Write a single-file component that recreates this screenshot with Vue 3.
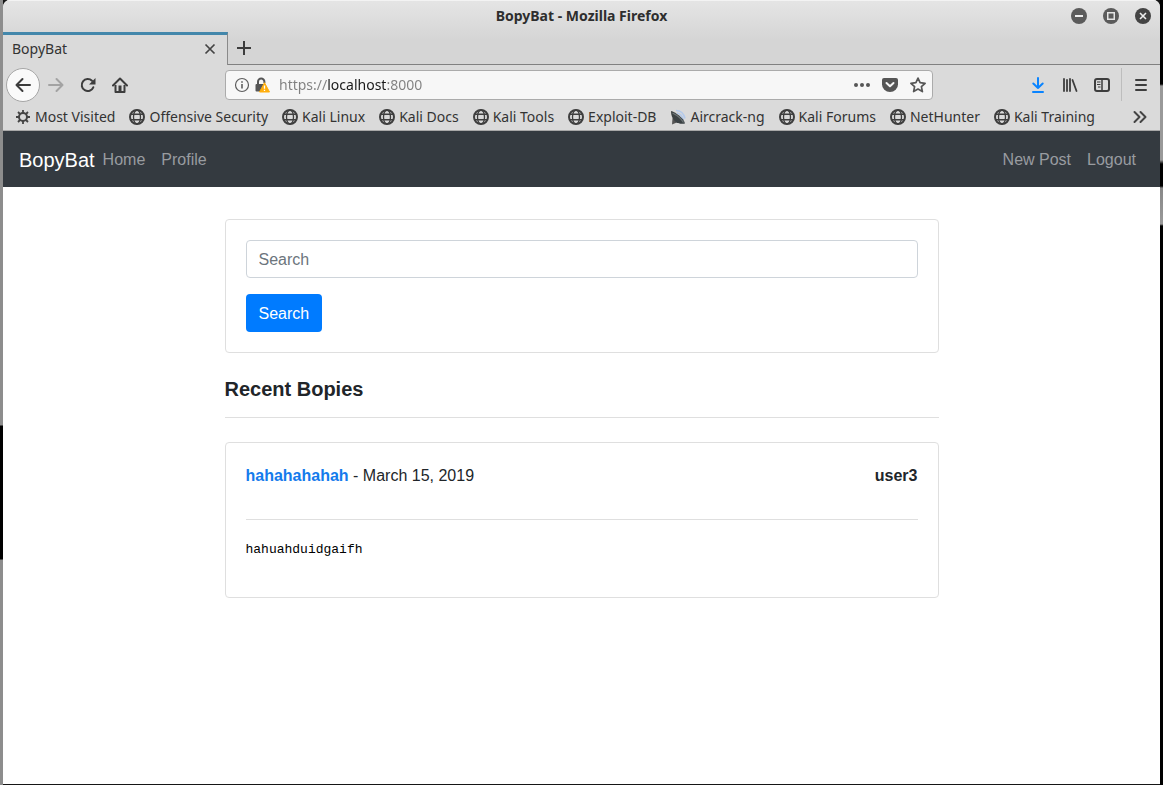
<script setup>
import { ref } from 'vue'

const address = ref('https://localhost:8000')
const query = ref('')
const bookmarks = [
  { name: 'Most Visited', icon: 'gear' },
  { name: 'Offensive Security', icon: 'globe' },
  { name: 'Kali Linux', icon: 'globe' },
  { name: 'Kali Docs', icon: 'globe' },
  { name: 'Kali Tools', icon: 'globe' },
  { name: 'Exploit-DB', icon: 'globe' },
  { name: 'Aircrack-ng', icon: 'dish' },
  { name: 'Kali Forums', icon: 'globe' },
  { name: 'NetHunter', icon: 'globe' },
  { name: 'Kali Training', icon: 'globe' },
]
const posts = [
  { title: 'hahahahahah', date: 'March 15, 2019', author: 'user3', body: 'hahuahduidgaifh' },
]
</script>

<template>
  <div class="desktop">
    <div class="window">
      <header class="chrome">
        <div class="titlebar">
          <span class="title">BopyBat - Mozilla Firefox</span>
          <div class="controls">
            <button aria-label="Minimize">
              <svg width="16" height="16" viewBox="0 0 16 16"><circle cx="8" cy="8" r="8" fill="#5b5b5b" /><path d="M4 8h8" stroke="#eee" stroke-width="2" /></svg>
            </button>
            <button aria-label="Maximize">
              <svg width="16" height="16" viewBox="0 0 16 16"><circle cx="8" cy="8" r="8" fill="#5b5b5b" /><path d="M4.75 4.75h6.5v6.5h-6.5z" fill="none" stroke="#e4e4e4" stroke-width="1.5" /></svg>
            </button>
            <button aria-label="Close">
              <svg width="16" height="16" viewBox="0 0 16 16"><circle cx="8" cy="8" r="8" fill="#444" /><path d="M5 5l6 6M11 5l-6 6" stroke="#eee" stroke-width="1.6" /></svg>
            </button>
          </div>
        </div>

        <div class="tabs">
          <div class="tab">
            <span>BopyBat</span>
            <button aria-label="Close tab">
              <svg width="16" height="16" viewBox="0 0 16 16"><path d="M3.500 3.500l9 9M12.500 3.500l-9 9" stroke="#444" stroke-width="1.700" /></svg>
            </button>
          </div>
          <div class="tab-rest">
            <button aria-label="New tab">
              <svg width="16" height="16" viewBox="0 0 16 16"><path d="M8 1v14M1 8h14" stroke="#3d3d3d" stroke-width="2" /></svg>
            </button>
          </div>
        </div>

        <div class="toolbar">
          <div class="nav-buttons">
            <button class="back" aria-label="Back">
              <svg width="16" height="16" viewBox="0 0 16 16"><path d="M15 8H1.500M7.500 2L1.500 8l6 6" fill="none" stroke="#3d3d3d" stroke-width="2" stroke-linecap="round" stroke-linejoin="round" /></svg>
            </button>
            <button aria-label="Forward">
              <svg width="16" height="16" viewBox="0 0 16 16"><path d="M1 8h13.500M8.500 2l6 6-6 6" fill="none" stroke="#a3a3a3" stroke-width="2" stroke-linecap="round" stroke-linejoin="round" /></svg>
            </button>
            <button aria-label="Reload">
              <svg width="16" height="16" viewBox="0 0 16 16"><path d="M13.300 10.300A6 6 0 1 1 12 3.800" fill="none" stroke="#3d3d3d" stroke-width="2" stroke-linecap="round" /><path d="M15.500 1v6.500H9z" fill="#3d3d3d" /></svg>
            </button>
            <button aria-label="Home">
              <svg width="16" height="16" viewBox="0 0 16 16"><path d="M1 8.500l7-7 7 7" fill="none" stroke="#3d3d3d" stroke-width="2" stroke-linecap="round" stroke-linejoin="round" /><path d="M3.500 8v7h9V8" fill="none" stroke="#3d3d3d" stroke-width="2" stroke-linejoin="round" /><path d="M6.500 8.500h3V15h-3z" fill="#3d3d3d" /></svg>
            </button>
          </div>

          <div class="urlbar">
            <button aria-label="Site information">
              <svg width="16" height="16" viewBox="0 0 16 16"><circle cx="8" cy="8" r="6.500" fill="none" stroke="#5c5c5c" stroke-width="1.200" /><path d="M8 7v4.500M8 4.200v1.600" stroke="#5c5c5c" stroke-width="1.600" /></svg>
            </button>
            <button aria-label="Connection security">
              <svg width="16" height="16" viewBox="0 0 16 16"><path d="M4 8V4.700a3.200 3.200 0 0 1 6.400 0V6" fill="none" stroke="#565656" stroke-width="2" /><rect x="1.500" y="7" width="10" height="7.500" rx="1" fill="#565656" /><path d="M10.500 5.700l5 9.300h-10z" fill="#ffae0d" stroke="#ffae0d" stroke-linejoin="round" /><path d="M10.500 8.500v3.200M10.500 12.700v1.400" stroke="#fff" stroke-width="1.300" /></svg>
            </button>
            <input v-model="address" aria-label="Address" spellcheck="false" />
            <div class="page-actions">
              <button aria-label="Page actions">
                <svg width="16" height="16" viewBox="0 0 16 16" fill="#565656"><circle cx="2" cy="8" r="2" /><circle cx="8" cy="8" r="2" /><circle cx="14" cy="8" r="2" /></svg>
              </button>
              <button aria-label="Save to Pocket">
                <svg width="16" height="16" viewBox="0 0 16 16"><path d="M2 1h12a2 2 0 0 1 2 2v4.500a8 7.500 0 0 1-16 0V3a2 2 0 0 1 2-2z" fill="#565656" /><path d="M4.500 6L8 9.300 11.500 6" fill="none" stroke="#f7f7f7" stroke-width="2" stroke-linecap="round" stroke-linejoin="round" /></svg>
              </button>
              <button aria-label="Bookmark this page">
                <svg width="16" height="16" viewBox="0 0 16 16"><path d="M8 1.100l2.100 4.600 5 .6-3.700 3.400 1 4.900L8 12.100l-4.400 2.500 1-4.900L.9 6.300l5-.6z" fill="none" stroke="#565656" stroke-width="1.700" stroke-linejoin="round" /></svg>
              </button>
            </div>
          </div>

          <div class="tools">
            <button aria-label="Downloads">
              <svg width="16" height="16" viewBox="0 0 16 16"><path d="M8 1v10M3.300 6.500L8 11l4.700-4.500M3 15h10" fill="none" stroke="#0a84ff" stroke-width="2" stroke-linecap="round" stroke-linejoin="round" /></svg>
            </button>
            <button aria-label="Library">
              <svg width="16" height="16" viewBox="0 0 16 16"><path d="M2 2v12M5 3v11M8 2v12M10.500 3l4 11" fill="none" stroke="#3d3d3d" stroke-width="1.800" stroke-linecap="round" /></svg>
            </button>
            <button aria-label="Sidebars">
              <svg width="16" height="16" viewBox="0 0 16 16"><rect x="1" y="2" width="14" height="12" rx="2" fill="none" stroke="#3d3d3d" stroke-width="2" /><path d="M8 2v12" stroke="#3d3d3d" stroke-width="1.500" /><path d="M3 5h3.500M3 7.500h3.500M4 10h2.500" stroke="#3d3d3d" /></svg>
            </button>
            <button class="menu" aria-label="Menu">
              <svg width="16" height="16" viewBox="0 0 16 16"><path d="M3 3h10M3 8h10M3 13h10" stroke="#3d3d3d" stroke-width="2" stroke-linecap="round" /></svg>
            </button>
          </div>
        </div>

        <nav class="bookmarks" aria-label="Bookmarks">
          <a v-for="mark in bookmarks" :key="mark.name" href="#">
            <svg v-if="mark.icon === 'gear'" width="16" height="16" viewBox="0 0 16 16"><circle cx="8" cy="8" r="4" fill="none" stroke="#444" stroke-width="2" /><path d="M8 1v3M8 12v3M1 8h3M12 8h3M3 3l2 2M11 11l2 2M13 3l-2 2M5 11l-2 2" stroke="#444" stroke-width="1.800" /></svg>
            <svg v-else-if="mark.icon === 'globe'" width="16" height="16" viewBox="0 0 16 16" fill="none" stroke="#3f3f3f"><circle cx="8" cy="8" r="7" stroke-width="2" /><ellipse cx="8" cy="8" rx="3.500" ry="7" stroke-width="1.300" /><path d="M2 5.300h12M2 10.700h12" stroke-width="1.400" /></svg>
            <svg v-else width="16" height="16" viewBox="0 0 16 16"><path d="M6 1.500q7 0 9 8M7 4q5 1 6 7" fill="none" stroke="#b4caeb" stroke-width="1.700" /><path d="M2.500 9L2 15.500 8 13z" fill="#555" /><path d="M1 2c4 1 13 7 14 12.500-6 1.500-14-2-14-12.500z" fill="#3a4144" /><path d="M2.500 4c4 2 9 6 11 9.500" fill="none" stroke="#6c7577" stroke-width="1.300" /></svg>
            <span>{{ mark.name }}</span>
          </a>
          <button aria-label="Show more bookmarks">
            <svg width="16" height="16" viewBox="0 0 16 16"><path d="M2.500 3l5 5-5 5M8.500 3l5 5-5 5" fill="none" stroke="#444" stroke-width="2" stroke-linecap="round" stroke-linejoin="round" /></svg>
          </button>
        </nav>
      </header>

      <nav class="site-nav" aria-label="Main">
        <a class="brand" href="#">BopyBat</a>
        <a href="#">Home</a>
        <a href="#">Profile</a>
        <a class="push" href="#">New Post</a>
        <a href="#">Logout</a>
      </nav>

      <main>
        <form class="card" @submit.prevent>
          <input v-model="query" type="text" placeholder="Search" aria-label="Search" />
          <button type="submit">Search</button>
        </form>
        <h1>Recent Bopies</h1>
        <hr />
        <article v-for="post in posts" :key="post.title" class="card">
          <div class="post-head">
            <span><a href="#">{{ post.title }}</a> - {{ post.date }}</span>
            <strong>{{ post.author }}</strong>
          </div>
          <hr />
          <pre>{{ post.body }}</pre>
        </article>
      </main>
    </div>
  </div>
</template>

<style>
body {
  background: #000;
}
</style>

<style scoped>
* {
  box-sizing: border-box;
}
.desktop {
  min-height: 100vh;
  display: flex;
  padding: 0 3px 1px;
  background:
    linear-gradient(#8d8d8d 425px, #000 426px, #000 559px, #8d8d8d 560px) left / 3px 100% no-repeat,
    linear-gradient(#000 84px, #999 86px, #999 160px, #000 164px, #000 186px, #888 188px, #999 224px, #000 226px) right / 3px 100% no-repeat,
    #161616;
}
.window {
  flex: 1;
  min-width: 0;
  background: #fff;
  border-radius: 7px 7px 0 0;
  overflow: hidden;
  font-family: "Liberation Sans", Arial, sans-serif;
  font-size: 16px;
  line-height: 24px;
  color: #212529;
}
button {
  border: 0;
  padding: 0;
  background: none;
  display: flex;
  align-items: center;
  justify-content: center;
  font: inherit;
}
svg {
  display: block;
  flex: none;
}
a {
  text-decoration: none;
}

/* Browser frame */
.chrome {
  background: linear-gradient(#e5e5e5, #d5d5d5 40px, #d5d5d5);
  border-bottom: 1px solid #a8a8a8;
  font-family: "Noto Sans", sans-serif;
  font-size: 14px;
  line-height: 20px;
  color: #333;
}
.titlebar {
  height: 32px;
  display: grid;
  grid-template-columns: 1fr auto 1fr;
  align-items: center;
  padding: 0 9px 2px;
  border-top: 1px solid #f3f3f3;
}
.title {
  grid-column: 2;
  font-weight: 700;
  color: #2e2e2e;
}
.controls {
  display: flex;
  justify-content: flex-end;
  gap: 16px;
}
.tabs {
  height: 33px;
  display: flex;
}
.tab {
  width: 225px;
  display: flex;
  align-items: center;
  justify-content: space-between;
  padding: 0 9px 2px;
  border-top: 3px solid #4387ab;
  border-right: 1px solid #8a8a8a;
  background: #dadada;
}
.tab-rest {
  flex: 1;
  display: flex;
  padding-left: 8px;
  border-bottom: 1px solid #808080;
}
.toolbar {
  height: 39px;
  display: flex;
  align-items: center;
  background: #dadada;
}
.nav-buttons {
  flex: none;
  width: 222px;
  display: flex;
  align-items: center;
  gap: 16px;
  padding-left: 3px;
}
.back {
  width: 34px;
  height: 34px;
  margin-right: -8px;
  border: 1px solid #a6a6a6;
  border-radius: 50%;
  background: #fafafa;
}
.urlbar {
  flex: 0 1 708px;
  min-width: 0;
  height: 30px;
  display: flex;
  align-items: center;
  gap: 4px;
  padding: 0 6px 0 8px;
  border: 1px solid #ababab;
  border-radius: 4px;
  background: #f7f7f7;
}
.urlbar input {
  flex: 1;
  min-width: 0;
  border: 0;
  outline: 0;
  padding: 0 5px;
  font: inherit;
  color: transparent;
  background: linear-gradient(90deg, #808080 53px, #1a1a1a 53px, #1a1a1a 113px, #808080 113px);
  background-clip: text;
}
.page-actions {
  display: flex;
  gap: 12px;
}
.tools {
  flex: 1;
  display: flex;
  align-items: center;
  justify-content: flex-end;
  gap: 16px;
  padding-right: 11px;
}
.menu {
  height: 33px;
  margin-left: -5px;
  padding-left: 11px;
  border-left: 1px solid #bdbdbd;
}
.bookmarks {
  height: 26px;
  display: flex;
  align-items: center;
  gap: 14px;
  padding: 0 12px;
  background: #dadada;
}
.bookmarks a {
  display: flex;
  align-items: center;
  gap: 4px;
  color: #333;
  white-space: nowrap;
}
.bookmarks button {
  margin-left: auto;
}

/* Site */
.site-nav {
  height: 56px;
  display: flex;
  align-items: center;
  padding: 2px 16px 0;
  background: #343a40;
}
.site-nav a {
  padding: 0 8px;
  color: #999ca0;
}
.site-nav .brand {
  padding: 0;
  font-size: 20px;
  color: #fff;
}
.site-nav .push {
  margin-left: auto;
}
main {
  max-width: 714px;
  margin: 32px auto;
}
.card {
  padding: 20px;
  border: 1px solid #dfdfdf;
  border-radius: 4px;
}
form input {
  display: block;
  width: 100%;
  height: 38px;
  margin-bottom: 16px;
  padding: 2px 12px 0;
  border: 1px solid #ced4da;
  border-radius: 4px;
  font: inherit;
  color: #495057;
}
form input::placeholder {
  color: #6c757d;
  opacity: 1;
}
form button {
  height: 38px;
  padding: 2px 13px 0;
  border-radius: 4px;
  background: #007bff;
  color: #fff;
}
h1 {
  margin: 24px 0 16px;
  font-size: 20px;
  line-height: 24px;
}
hr {
  margin: 0 0 24px;
  border: 0;
  border-top: 1px solid #dfdfdf;
}
.post-head {
  display: flex;
  justify-content: space-between;
  line-height: 26px;
}
.post-head a {
  font-weight: 700;
  color: #147bec;
}
.card hr {
  margin: 30px 0 16px;
}
pre {
  margin: 0 0 14px;
  font-family: "Liberation Mono", monospace;
  font-size: 13px;
  line-height: 27px;
  color: #000;
}
</style>
